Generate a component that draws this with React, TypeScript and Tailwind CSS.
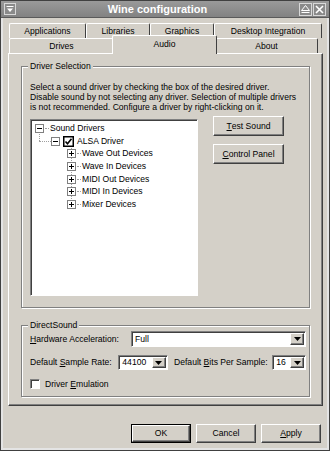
import React from 'react';

const raised =
  'border border-t-white border-l-white border-r-[#404040] border-b-[#404040] shadow-[inset_-1px_-1px_0_#808080]';
const sunken =
  'border border-t-[#808080] border-l-[#808080] border-r-white border-b-white shadow-[inset_1px_1px_0_#404040]';
const etched = 'border border-[#808080] shadow-[1px_1px_0_#fff,inset_1px_1px_0_#fff]';

function U({ children }: { children: React.ReactNode }) {
  return <span className="underline underline-offset-[1px]">{children}</span>;
}

function Expander({ open }: { open?: boolean }) {
  return (
    <svg width="9" height="9" viewBox="0 0 9 9" className="shrink-0 relative z-10">
      <rect x="0.5" y="0.5" width="8" height="8" fill="#fff" stroke="#808080" />
      <path d="M2 4.5h5" stroke="#000" />
      {!open && <path d="M4.5 2v5" stroke="#000" />}
    </svg>
  );
}

function Dash() {
  return <span className="w-[4px] shrink-0 border-t border-dotted border-[#a0a0a0]" />;
}

function DownArrow() {
  return (
    <div className={`w-[14px] h-full flex items-center justify-center bg-[#d4d0c8] ${raised}`}>
      <svg width="7" height="4" viewBox="0 0 7 4">
        <path d="M0 0h7L3.5 4z" fill="#000" />
      </svg>
    </div>
  );
}

function Combo({ value, className }: { value: string; className: string }) {
  return (
    <div className={`flex items-stretch bg-white p-[1px] ${sunken} ${className}`}>
      <div className="flex-1 pl-[2px] leading-none flex items-center">{value}</div>
      <DownArrow />
    </div>
  );
}

function Button({ children, def, className }: { children: React.ReactNode; def?: boolean; className?: string }) {
  const inner = (
    <div className={`h-full w-full flex items-center justify-center bg-[#d4d0c8] ${raised}`}>{children}</div>
  );
  return def ? (
    <div className={`border border-black ${className}`}>{inner}</div>
  ) : (
    <div className={className}>{inner}</div>
  );
}

function Tab({ label, w, selected }: { label: string; w: string; selected?: boolean }) {
  return (
    <div
      className={`${w} flex items-center justify-center border-t border-l border-t-white border-l-white border-r border-r-[#404040] rounded-t-[2px] bg-[#d4d0c8] ${
        selected ? 'relative z-10 h-[19px] -mt-[3px] -mb-[1px] -mx-[2px] px-[2px] pb-[2px]' : 'h-[15px]'
      }`}
    >
      {label}
    </div>
  );
}

const treeChildren = ['Wave Out Devices', 'Wave In Devices', 'MIDI Out Devices', 'MIDI In Devices', 'Mixer Devices'];

export default function App() {
  return (
    <div className="w-[330px] h-[451px] bg-[#d4d0c8] font-['Liberation_Sans',Arial,sans-serif] text-[8.6px] text-black border border-[#404040] flex flex-col overflow-hidden">
      {/* title bar */}
      <div className="h-[17px] shrink-0 bg-gradient-to-b from-[#9a9a9a] to-[#828282] flex items-center px-[3px] border-b border-[#5a5a5a]">
        <div className="w-[12px] h-[12px] border border-[#d8d8d8] bg-[#8a8a8a] flex items-center justify-center">
          <svg width="8" height="7" viewBox="0 0 8 7">
            <path d="M0.5 0.5h7" stroke="#fff" />
            <path d="M1 2.5h6L4 6z" fill="#fff" />
          </svg>
        </div>
        <div className="flex-1 text-center text-white font-bold text-[11px] leading-none">Wine configuration</div>
        <div className="flex gap-[1px]">
          <div className="w-[13px] h-[13px] border border-[#d8d8d8] bg-[#8a8a8a] flex items-center justify-center">
            <svg width="9" height="8" viewBox="0 0 9 8">
              <path d="M4.5 0.5L8.5 5.5H0.5z" fill="none" stroke="#fff" />
              <path d="M0.5 7.5h8" stroke="#fff" />
            </svg>
          </div>
          <div className="w-[13px] h-[13px] border border-[#d8d8d8] bg-[#8a8a8a] flex items-center justify-center">
            <svg width="9" height="9" viewBox="0 0 9 9">
              <path d="M1 1l7 7M8 1l-7 7" stroke="#fff" strokeWidth="1.6" />
            </svg>
          </div>
        </div>
      </div>

      {/* body */}
      <div className="flex-1 flex flex-col border-x-2 border-b-2 border-[#e4e4e4] px-[5px] pt-[5px]">
        {/* tabs */}
        <div className="flex flex-col pl-[1px]">
          <div className="flex">
            <Tab label="Applications" w="w-[77px]" />
            <Tab label="Libraries" w="w-[64px]" />
            <Tab label="Graphics" w="w-[64px]" />
            <Tab label="Desktop Integration" w="w-[108px]" />
          </div>
          <div className="flex">
            <Tab label="Drives" w="w-[105px]" />
            <Tab label="Audio" w="w-[105px]" selected />
            <Tab label="About" w="w-[103px]" />
          </div>
        </div>

        {/* panel */}
        <div className={`h-[353px] w-[315px] ${raised} px-[12px] pt-[12px]`}>
          {/* driver selection */}
          <div className={`relative h-[242px] ${etched} px-[8px] pt-[15px]`}>
            <span className="absolute -top-[6px] left-[6px] bg-[#d4d0c8] px-[2px] leading-[10px]">Driver Selection</span>
            <p className="leading-[10px]">
              Select a sound driver by checking the box of the desired driver.
              <br />
              Disable sound by not selecting any driver. Selection of multiple drivers
              <br />
              is not recommended. Configure a driver by right-clicking on it.
            </p>
            <div className="flex mt-[7px]">
              <div className={`w-[168px] h-[177px] bg-white ${sunken} pt-[2px] pl-[4px]`}>
                <div className="relative">
                  <div className="flex items-center h-[12.7px] gap-[1px]">
                    <Expander open />
                    <Dash />
                    <span>Sound Drivers</span>
                  </div>
                  <div className="flex items-center h-[12.7px] pl-[16px] gap-[3px]">
                    <Expander open />
                    <svg width="11" height="11" viewBox="0 0 11 11" className="shrink-0 relative z-10">
                      <rect x="0.75" y="0.75" width="9.5" height="9.5" fill="#fff" stroke="#000" strokeWidth="1.5" />
                      <path d="M2.5 5.5l2 2.2 4-5" fill="none" stroke="#000" strokeWidth="1.6" />
                    </svg>
                    <span>ALSA Driver</span>
                  </div>
                  {treeChildren.map((c) => (
                    <div key={c} className="flex items-center h-[12.7px] pl-[32px] gap-[1px]">
                      <Expander />
                      <Dash />
                      <span>{c}</span>
                    </div>
                  ))}
                  {/* dotted connectors */}
                  <div className="absolute left-[4px] top-[10px] h-[9px] border-l border-dotted border-[#a0a0a0]" />
                  <div className="absolute left-[4px] top-[19px] w-[12px] border-t border-dotted border-[#a0a0a0]" />
                  <div className="absolute left-[36px] top-[24px] h-[59px] border-l border-dotted border-[#a0a0a0]" />
                </div>
              </div>
              <div className="flex flex-col gap-[8px] ml-[15px] -mt-[3px]">
                <Button className="w-[71px] h-[20px]">
                  <U>T</U>est Sound
                </Button>
                <Button className="w-[71px] h-[20px]">
                  <U>C</U>ontrol Panel
                </Button>
              </div>
            </div>
          </div>

          {/* direct sound */}
          <div className={`relative mt-[17px] h-[72px] ${etched} pl-[8px] pr-[3px] pt-[5px]`}>
            <span className="absolute -top-[6px] left-[6px] bg-[#d4d0c8] px-[2px] leading-[10px]">DirectSound</span>
            <div className="flex items-center h-[16px]">
              <span className="w-[101px]">
                <U>H</U>ardware Acceleration:
              </span>
              <Combo value="Full" className="flex-1 h-[16px]" />
            </div>
            <div className="flex items-center h-[15px] mt-[8px]">
              <span className="w-[89px]">
                Default <U>S</U>ample Rate:
              </span>
              <Combo value="44100" className="w-[50px] h-[15px]" />
              <span className="ml-[6px] w-[99px]">
                Default <U>B</U>its Per Sample:
              </span>
              <Combo value="16" className="w-[34px] h-[15px]" />
            </div>
            <div className="flex items-center mt-[8px] gap-[5px]">
              <div className={`w-[10px] h-[10px] bg-white ${sunken}`} />
              <span>
                Driver <U>E</U>mulation
              </span>
            </div>
          </div>
        </div>

        {/* bottom buttons */}
        <div className="flex justify-end gap-[5px] mt-[18px] pr-[1px]">
          <Button def className="w-[60px] h-[19px]">
            OK
          </Button>
          <Button className="w-[60px] h-[19px]">Cancel</Button>
          <Button className="w-[60px] h-[19px]">
            <U>A</U>pply
          </Button>
        </div>
      </div>
    </div>
  );
}
